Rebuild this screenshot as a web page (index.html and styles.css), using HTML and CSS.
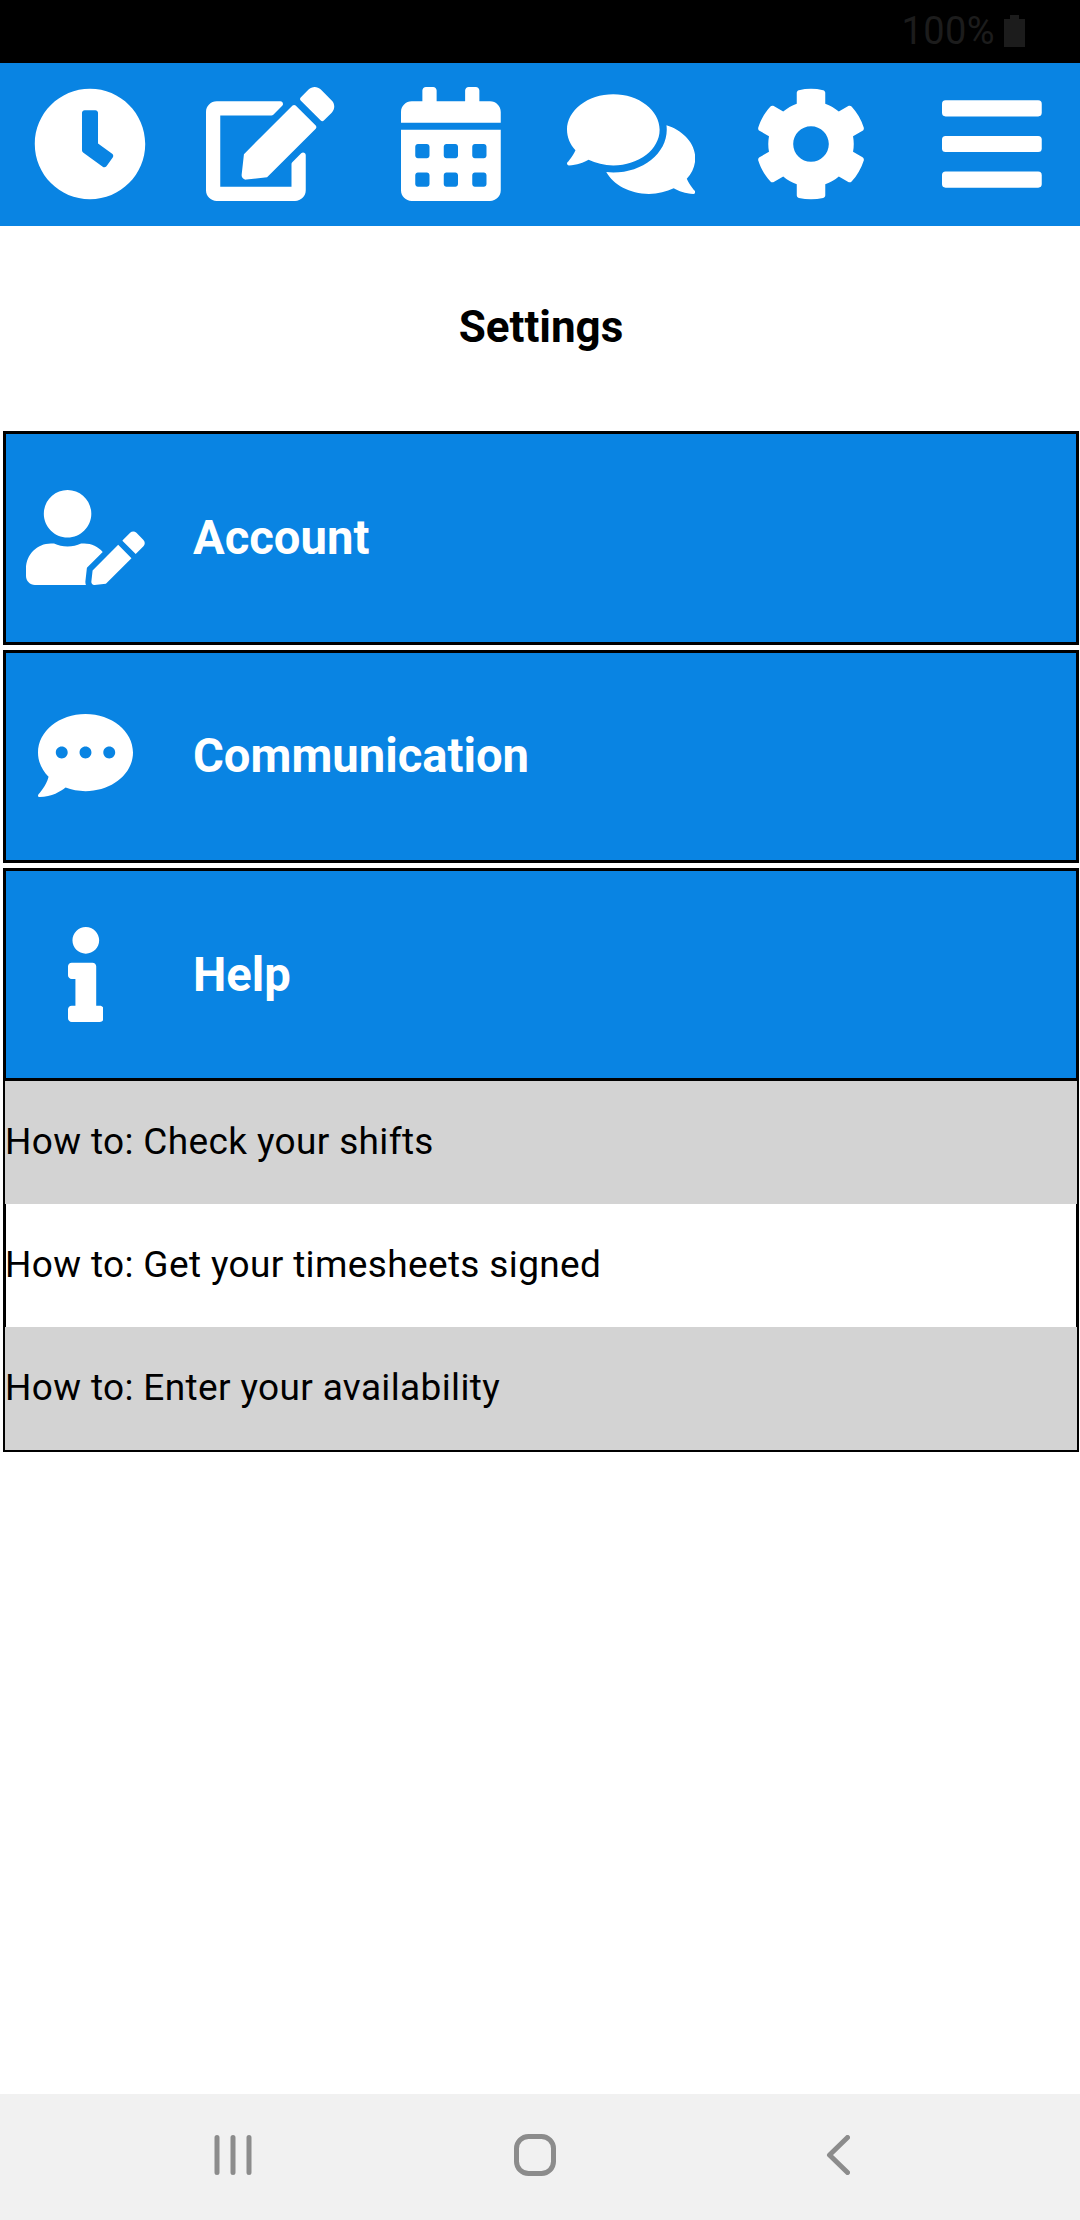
FILE: index.html
```html
<!DOCTYPE html>
<html lang="en">
<head>
<meta charset="utf-8">
<title>Settings</title>
<link rel="stylesheet" href="styles.css">
</head>
<body>
<div class="status">
  <span class="battery-level">100%</span>
  <svg class="battery" viewBox="0 0 21 32"><path d="M6 0h9v4h6v28H0V4h6z"/></svg>
</div>
<nav class="topbar">
  <a class="tab"><svg viewBox="0 0 512 512"><path d="M256 8C119 8 8 119 8 256s111 248 248 248 248-111 248-248S393 8 256 8zm57.1 350.1L224.900 294c-3.100-2.300-4.900-5.900-4.900-9.700V116c0-6.600 5.400-12 12-12h48c6.600 0 12 5.400 12 12v137.700l63.500 46.200c5.400 3.900 6.500 11.400 2.600 16.800l-28.200 38.800c-3.900 5.300-11.400 6.500-16.800 2.600z"/></svg></a>
  <a class="tab"><svg viewBox="0 0 576 512"><path d="M402.600 83.200l90.200 90.200c3.800 3.800 3.800 10 0 13.800L274.400 405.600l-92.800 10.300c-12.400 1.400-22.900-9.100-21.500-21.500l10.300-92.800L388.800 83.200c3.800-3.800 10-3.800 13.800 0zm162-22.900l-48.800-48.800c-15.200-15.200-39.900-15.200-55.200 0l-35.400 35.400c-3.800 3.800-3.800 10 0 13.800l90.200 90.200c3.800 3.800 10 3.800 13.800 0l35.400-35.400c15.200-15.300 15.200-40 0-55.200zM384 346.200V448H64V128h229.800c3.200 0 6.200-1.300 8.500-3.500l40-40c7.600-7.600 2.200-20.500-8.500-20.500H48C21.500 64 0 85.500 0 112v352c0 26.500 21.500 48 48 48h352c26.500 0 48-21.500 48-48V306.200c0-10.700-12.900-16-20.500-8.500l-40 40c-2.200 2.300-3.500 5.300-3.500 8.500z"/></svg></a>
  <a class="tab"><svg viewBox="0 0 448 512"><path d="M0 464c0 26.500 21.500 48 48 48h352c26.500 0 48-21.500 48-48V192H0v272zm320-196c0-6.600 5.400-12 12-12h40c6.600 0 12 5.400 12 12v40c0 6.600-5.400 12-12 12h-40c-6.600 0-12-5.400-12-12v-40zm0 128c0-6.600 5.400-12 12-12h40c6.600 0 12 5.400 12 12v40c0 6.600-5.400 12-12 12h-40c-6.600 0-12-5.400-12-12v-40zM192 268c0-6.600 5.400-12 12-12h40c6.600 0 12 5.400 12 12v40c0 6.600-5.400 12-12 12h-40c-6.600 0-12-5.400-12-12v-40zm0 128c0-6.600 5.400-12 12-12h40c6.600 0 12 5.400 12 12v40c0 6.600-5.400 12-12 12h-40c-6.600 0-12-5.400-12-12v-40zM64 268c0-6.600 5.400-12 12-12h40c6.600 0 12 5.400 12 12v40c0 6.600-5.400 12-12 12H76c-6.600 0-12-5.400-12-12v-40zm0 128c0-6.600 5.400-12 12-12h40c6.600 0 12 5.400 12 12v40c0 6.600-5.400 12-12 12H76c-6.600 0-12-5.400-12-12v-40zM400 64h-48V16c0-8.800-7.200-16-16-16h-32c-8.800 0-16 7.200-16 16v48H160V16c0-8.800-7.200-16-16-16h-32c-8.800 0-16 7.200-16 16v48H48C21.500 64 0 85.500 0 112v48h448v-48c0-26.500-21.500-48-48-48z"/></svg></a>
  <a class="tab"><svg viewBox="0 0 576 512"><path d="M416 192c0-88.400-93.100-160-208-160S0 103.600 0 192c0 34.300 14.100 65.900 38 92-13.400 30.200-35.500 54.200-35.800 54.500-2.200 2.300-2.800 5.700-1.500 8.700S4.800 352 8 352c36.600 0 66.900-12.300 88.700-25 32.200 15.700 70.300 25 111.300 25 114.900 0 208-71.600 208-160zm122 220c23.900-26 38-57.700 38-92 0-66.900-53.500-124.200-129.300-148.100.9 6.600 1.300 13.300 1.300 20.100 0 105.900-107.700 192-240 192-10.800 0-21.300-.8-31.700-1.900C207.800 439.600 281.800 480 368 480c41 0 79.100-9.200 111.300-25 21.800 12.700 52.100 25 88.700 25 3.200 0 6.100-1.900 7.300-4.800 1.300-2.900.7-6.300-1.500-8.700-.3-.3-22.400-24.200-35.800-54.500z"/></svg></a>
  <a class="tab"><svg viewBox="0 0 512 512"><path d="M487.400 315.700l-42.600-24.600c4.300-23.200 4.300-47 0-70.200l42.600-24.600c4.900-2.800 7.100-8.600 5.500-14-11.100-35.600-30-67.800-54.700-94.600-3.800-4.100-10-5.100-14.800-2.300L380.800 110c-17.900-15.400-38.500-27.300-60.800-35.100V25.800c0-5.600-3.900-10.500-9.400-11.700-36.700-8.200-74.300-7.800-109.200 0-5.500 1.200-9.400 6.100-9.400 11.700V75c-22.200 7.900-42.800 19.800-60.800 35.100L88.700 85.500c-4.900-2.800-11-1.900-14.800 2.300-24.700 26.700-43.600 58.900-54.700 94.600-1.700 5.400.6 11.200 5.500 14L67.300 221c-4.300 23.200-4.300 47 0 70.200l-42.600 24.600c-4.900 2.800-7.100 8.600-5.500 14 11.100 35.600 30 67.800 54.700 94.600 3.800 4.100 10 5.100 14.800 2.300l42.600-24.600c17.900 15.400 38.500 27.300 60.800 35.100v49.200c0 5.600 3.900 10.500 9.400 11.700 36.700 8.200 74.300 7.800 109.200 0 5.500-1.200 9.400-6.100 9.400-11.700v-49.200c22.200-7.900 42.800-19.800 60.800-35.100l42.600 24.600c4.900 2.800 11 1.900 14.800-2.300 24.700-26.700 43.600-58.900 54.700-94.600 1.500-5.500-.7-11.300-5.600-14.100zM256 336c-44.100 0-80-35.900-80-80s35.900-80 80-80 80 35.900 80 80-35.900 80-80 80z"/></svg></a>
  <a class="tab"><svg viewBox="0 0 448 512"><rect y="60" width="448" height="72" rx="16"/><rect y="220" width="448" height="72" rx="16"/><rect y="380" width="448" height="72" rx="16"/></svg></a>
</nav>
<main class="content">
  <h1 class="title">Settings</h1>
  <section class="item account">
    <span class="item-icon"><svg viewBox="0 0 640 512"><path d="M224 256c70.700 0 128-57.300 128-128S294.700 0 224 0 96 57.300 96 128s57.300 128 128 128zm89.600 32h-16.700c-22.200 10.200-46.900 16-72.900 16s-50.600-5.800-72.900-16h-16.700C60.200 288 0 348.200 0 422.400V464c0 26.500 21.500 48 48 48h274.900c-2.400-6.800-3.400-14-2.600-21.300l6.800-60.900 1.200-11.100 7.900-7.900 77.300-77.300c-24.500-27.700-60-45.500-99.900-45.500zm45.300 145.300l-6.800 61c-1.100 10.200 7.500 18.800 17.600 17.600l60.900-6.800 137.900-137.900-71.700-71.700-137.900 137.800zM633 268.900L595.100 231c-9.300-9.300-24.500-9.300-33.800 0l-37.800 37.800-4.100 4.100 71.800 71.700 41.800-41.800c9.300-9.400 9.300-24.500 0-33.900z"/></svg></span>
    <h2 class="item-label">Account</h2>
  </section>
  <section class="item communication">
    <span class="item-icon"><svg viewBox="0 0 512 512"><path d="M256 32C114.600 32 0 125.100 0 240c0 49.600 21.400 95 57 130.700C44.500 421.100 2.700 466 2.200 466.500c-2.200 2.300-2.800 5.700-1.500 8.700S4.800 480 8 480c66.300 0 116-31.800 140.600-51.400 32.700 12.300 69 19.400 107.400 19.400 141.400 0 256-93.100 256-208S397.400 32 256 32zM128 272c-17.700 0-32-14.300-32-32s14.300-32 32-32 32 14.300 32 32-14.300 32-32 32zm128 0c-17.700 0-32-14.300-32-32s14.300-32 32-32 32 14.300 32 32-14.300 32-32 32zm128 0c-17.700 0-32-14.300-32-32s14.300-32 32-32 32 14.300 32 32-14.300 32-32 32z"/></svg></span>
    <h2 class="item-label">Communication</h2>
  </section>
  <section class="item">
    <span class="item-icon"><svg viewBox="0 0 192 512"><path d="M20 424.229h20V279.771H20c-11.046 0-20-8.954-20-20V212c0-11.046 8.954-20 20-20h112c11.046 0 20 8.954 20 20v212.229h20c11.046 0 20 8.954 20 20V492c0 11.046-8.954 20-20 20H20c-11.046 0-20-8.954-20-20v-47.771c0-11.046 8.954-20 20-20zM96 0C56.235 0 24 32.235 24 72s32.235 72 72 72 72-32.235 72-72S135.764 0 96 0z"/></svg></span>
    <h2 class="item-label">Help</h2>
  </section>
  <ul class="topics">
    <li class="topic shaded">How to: Check your shifts</li>
    <li class="topic">How to: Get your timesheets signed</li>
    <li class="topic shaded">How to: Enter your availability</li>
  </ul>
</main>
<footer class="navbar">
  <svg class="recents" viewBox="0 0 38 40"><path d="M3 2.500v35M19 2.500v35M35 2.500v35"/></svg>
  <svg class="home" viewBox="0 0 42 42"><rect x="2.500" y="2.500" width="37" height="37" rx="12"/></svg>
  <svg class="back" viewBox="0 0 24 40"><path d="M21.500 2.500L3.500 20l18 17.500"/></svg>
</footer>
</body>
</html>
```
FILE: styles.css
```css
* { box-sizing: border-box; }

body {
  margin: 0;
  height: 2220px;
  display: flex;
  flex-direction: column;
  background: #fff;
  color: #000;
  font-family: Roboto, "Liberation Sans", sans-serif;
}

svg { display: block; }

.status {
  height: 63px;
  padding: 0 55px 1px 0;
  display: flex;
  justify-content: flex-end;
  align-items: center;
  gap: 9px;
  background: #000;
  color: #1c1c1c;
}
.battery-level { font-size: 38px; line-height: 44px; letter-spacing: 0.4px; }
.battery { width: 21px; height: 32px; fill: #1c1c1c; }

.topbar {
  height: 163px;
  padding: 0 0 2px;
  display: grid;
  grid-template-columns: repeat(6, 180.3px);
  align-items: center;
  background: #0984e3;
}
.tab { display: flex; justify-content: center; }
.tab svg { height: 114px; fill: #fff; }

.content { flex: 1; padding: 0 1px 0 3px; }

.title {
  margin: 0;
  height: 205px;
  padding-top: 2px;
  text-align: center;
  font-size: 44px;
  line-height: 198px;
  font-weight: 700;
}

.item {
  height: 213px;
  margin-bottom: 5px;
  display: flex;
  align-items: center;
  border: 3px solid #000;
  background: #0984e3;
  color: #fff;
}
.item.account { height: 214px; padding-bottom: 1px; }
.item.communication { padding-bottom: 2px; }
.item:last-of-type { margin-bottom: 0; }
.item-icon { width: 159px; display: flex; justify-content: center; }
.item-icon svg { height: 95px; fill: #fff; }
.item-label { margin: 0 0 0 28px; font-size: 47.2px; line-height: 56px; font-weight: 700; }

.topics {
  margin: 0;
  padding: 0;
  list-style: none;
  border: 2px solid #000;
  border-top: 0;
}
.topic {
  height: 123px;
  border: solid #000;
  border-width: 0 1px;
  font-size: 37px;
  line-height: 122px;
  letter-spacing: 0.36px;
  text-indent: -1px;
}
.topic.shaded { border-color: #d3d3d3; background: #d3d3d3; }

.navbar {
  height: 126px;
  padding: 0 0 4px 214px;
  display: flex;
  align-items: center;
  background: #f1f1f1;
}
.navbar svg { fill: none; stroke: #8c8c8c; stroke-width: 5; stroke-linecap: round; stroke-linejoin: round; }
.recents { width: 38px; height: 40px; }
.home { width: 42px; height: 42px; margin: 0 270px 0 262px; }
.back { width: 24px; height: 40px; }
```
